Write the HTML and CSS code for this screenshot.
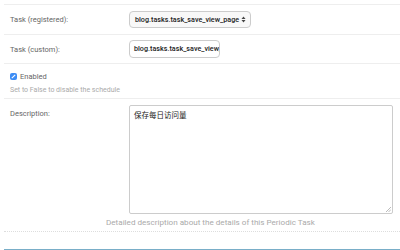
FILE: index.html
```html
<!DOCTYPE html>
<html lang="en">
  <head>
    <meta charset="UTF-8" />
    <meta name="viewport" content="width=device-width, initial-scale=1.0" />
    <title>Periodic Task</title>
    <link rel="stylesheet" href="styles.css">
  </head>
  <body>
    <div class="module">
      <div class="form-row task-row">
        <label class="field-label">Task (registered):</label>
        <div class="select-box">
          <span>blog.tasks.task_save_view_page</span>
          <svg class="arrows" width="5" height="7" viewBox="0 0 5 7">
            <path d="M0.5 3 L2.5 0.5 L4.5 3 Z" fill="#444" />
            <path d="M0.5 4 L2.5 6.5 L4.5 4 Z" fill="#444" />
          </svg>
        </div>
      </div>

      <div class="form-row custom-row">
        <label class="field-label">Task (custom):</label>
        <div class="text-input">blog.tasks.task_save_view_page</div>
      </div>

      <div class="form-row checkbox-row">
        <div class="check-line">
          <span class="checkbox">
            <svg width="7" height="7" viewBox="0 0 7 7">
              <path d="M1.8 5.2 L5.2 1.8" stroke="#fff" stroke-width="1.1" fill="none" />
            </svg>
          </span>
          <label class="check-label">Enabled</label>
        </div>
        <div class="help">Set to False to disable the schedule</div>
      </div>

      <div class="form-row desc-row">
        <div class="desc-line">
          <label class="field-label">Description:</label>
          <div class="textarea">
            保存每日访问量
            <svg class="grip" width="6" height="6" viewBox="0 0 6 6">
              <path d="M1 6 L6 1 M3.5 6 L6 3.5" stroke="#aaa" stroke-width="0.8" />
            </svg>
          </div>
        </div>
        <div class="help desc-help">Detailed description about the details of this Periodic Task</div>
      </div>
    </div>

    <div class="next-module"></div>
  </body>
</html>
```

FILE: styles.css
```css
* {
  box-sizing: border-box;
}

body {
  margin: 0;
  background: #fff;
  font-family: Roboto, "Noto Sans CJK SC", sans-serif;
  font-size: 7.5px;
  color: #666;
}

.module {
  margin: 4px 0 0 4px;
  border-top: 1px solid #eee;
}

.form-row {
  display: flex;
  align-items: center;
  border-bottom: 1px solid #eee;
  padding-left: 6px;
}

.task-row {
  height: 30px;
}

.custom-row {
  height: 29px;
}

.field-label {
  width: 119px;
  flex-shrink: 0;
}

.select-box {
  display: flex;
  align-items: center;
  gap: 2px;
  height: 17px;
  padding: 0 4px 0 5px;
  border: 1px solid #ccc;
  border-radius: 4px;
  background: #f8f8f8;
  color: #222;
  font-size: 7.2px;
  font-weight: 500;
}

.text-input {
  width: 91px;
  height: 18px;
  line-height: 16px;
  padding: 0 3px 0 4px;
  border: 1px solid #ccc;
  border-radius: 4px;
  color: #222;
  font-size: 7.2px;
  font-weight: 500;
  overflow: hidden;
  white-space: nowrap;
}

.checkbox-row {
  flex-direction: column;
  align-items: flex-start;
  justify-content: flex-start;
  height: 35px;
  padding-top: 7px;
  gap: 4px;
}

.check-line {
  display: flex;
  align-items: center;
  gap: 3px;
  height: 10px;
}

.checkbox {
  display: flex;
  align-items: center;
  justify-content: center;
  width: 7px;
  height: 7px;
  border-radius: 2px;
  background: #3d8df5;
}

.check-label {
  color: #666;
}

.help {
  font-size: 7px;
  line-height: 10px;
  color: #aaa;
}

.desc-row {
  flex-direction: column;
  align-items: stretch;
  height: 133px;
  padding-top: 6px;
  border-bottom: 1px dotted #ddd;
}

.desc-line {
  display: flex;
  align-items: flex-start;
}

.desc-line .field-label {
  padding-top: 4px;
}

.textarea {
  position: relative;
  width: 264px;
  height: 109px;
  padding: 3px 4px;
  border: 1px solid #ccc;
  border-radius: 2px;
  color: #222;
}

.grip {
  position: absolute;
  right: 1px;
  bottom: 1px;
}

.desc-help {
  margin-top: 3px;
  padding-left: 96px;
  font-size: 8.1px;
}

.next-module {
  margin: 17px 0 0 4px;
  height: 2px;
  background: #79aec8;
}
```
